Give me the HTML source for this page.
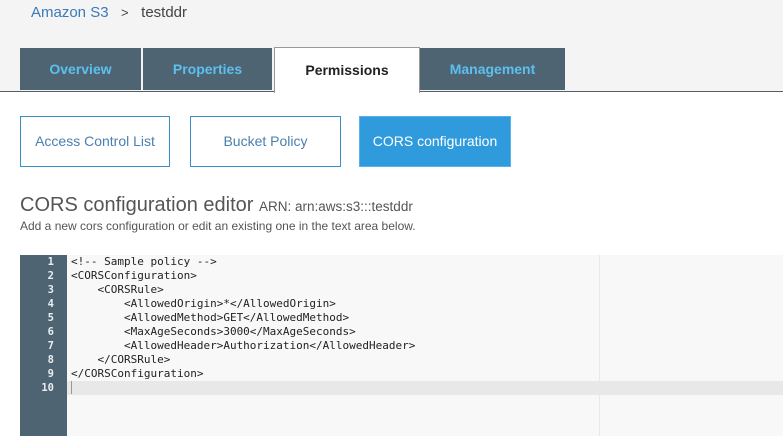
<!DOCTYPE html>
<html><head><style>
body{margin:0;width:783px;height:436px;overflow:hidden;background:#fff;font-family:"Liberation Sans",sans-serif;position:relative}
.top{position:absolute;left:0;top:0;width:783px;height:91px;background:#f4f4f5;border-bottom:1px solid #555f66}
.bc{position:absolute;top:4px;left:31px;font-size:15px;color:#3a7ab8}
.bc span{color:#444}
.tab{position:absolute;top:48px;height:42px;background:#4f6473;color:#5cc0ee;font-weight:bold;font-size:14px;text-align:center;line-height:42px}
.tab.act{background:#fff;color:#222;border:1px solid #999;border-bottom:none;top:47px;height:45px;line-height:44px}
.btn{position:absolute;top:116px;height:49px;border:1px solid #3a8fc8;color:#4a7fb0;font-size:14px;text-align:center;line-height:49px;background:#fff}
.btn.on{background:#2f9bdc;color:#fff;border-color:#5ab0e8}
h1{position:absolute;left:20px;top:194px;margin:0;font-weight:normal;font-size:20px;color:#555}
h1 small{font-size:13.5px;color:#555}
.sub{position:absolute;left:20px;top:219px;font-size:12px;color:#555}
.ed{position:absolute;left:20px;top:255px;width:763px;height:181px;background:#f8f8f8}
.gut{position:absolute;left:0;top:0;width:47px;height:181px;background:#4f6473}
.ln{position:absolute;left:0;width:34px;text-align:right;font-family:"DejaVu Sans Mono",monospace;font-size:10.5px;font-weight:bold;color:#e8edf0;line-height:14px}
.code{position:absolute;left:51px;top:0;font-family:"DejaVu Sans Mono",monospace;font-size:11px;line-height:14px;color:#222;white-space:pre}
.hl{position:absolute;left:47px;top:126px;width:716px;height:14px;background:#e8e8e8}
.pm{position:absolute;left:579px;top:0;width:1px;height:181px;background:#e8e8e8}
</style></head><body>
<div class="top"></div>
<div class="bc">Amazon S3 &nbsp;&nbsp;<span style="font-size:13px">&gt;</span>&nbsp;&nbsp; <span>testddr</span></div>
<div class="tab" style="left:20px;width:121px">Overview</div>
<div class="tab" style="left:143px;width:129px">Properties</div>
<div class="tab act" style="left:274px;width:144px">Permissions</div>
<div class="tab" style="left:420px;width:145px">Management</div>
<div class="btn" style="left:20px;width:148px">Access Control List</div>
<div class="btn" style="left:190px;width:149px">Bucket Policy</div>
<div class="btn on" style="left:359px;width:150px">CORS configuration</div>
<h1>CORS configuration editor <small>ARN: arn:aws:s3:::testddr</small></h1>
<div class="sub">Add a new cors configuration or edit an existing one in the text area below.</div>
<div class="ed">
<div class="hl"></div><div class="pm"></div>
<div class="gut"></div>
<div class="ln" style="top:0">1<br>2<br>3<br>4<br>5<br>6<br>7<br>8<br>9<br>10</div>
<div class="code">&lt;!-- Sample policy --&gt;
&lt;CORSConfiguration&gt;
    &lt;CORSRule&gt;
        &lt;AllowedOrigin&gt;*&lt;/AllowedOrigin&gt;
        &lt;AllowedMethod&gt;GET&lt;/AllowedMethod&gt;
        &lt;MaxAgeSeconds&gt;3000&lt;/MaxAgeSeconds&gt;
        &lt;AllowedHeader&gt;Authorization&lt;/AllowedHeader&gt;
    &lt;/CORSRule&gt;
&lt;/CORSConfiguration&gt;
<span style="border-left:1px solid #999"> </span></div>
</div>
</body></html>
